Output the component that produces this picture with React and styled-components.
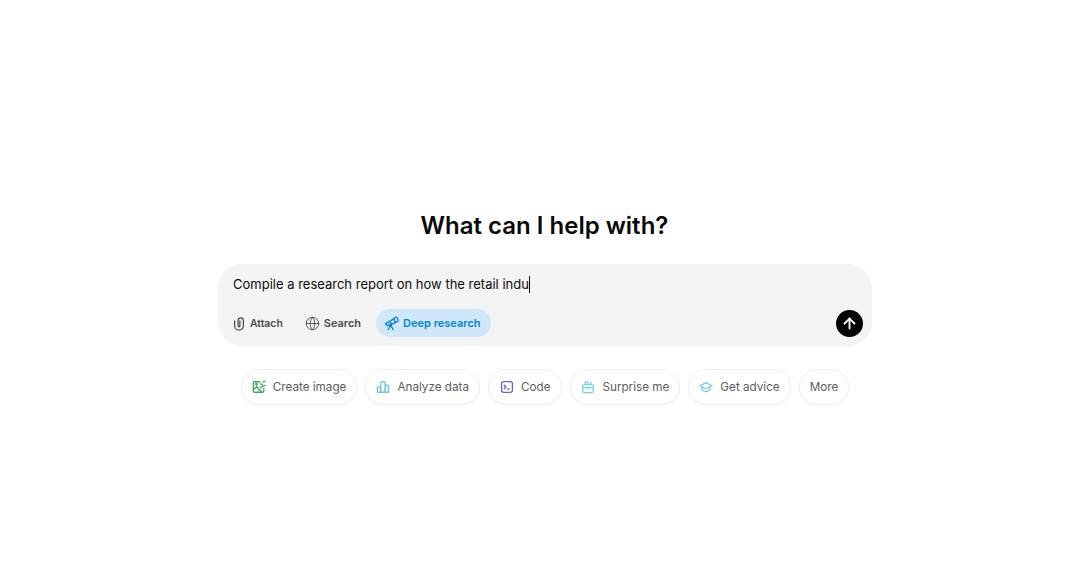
import React from 'react'
import styled, { createGlobalStyle } from 'styled-components'
import { ArrowUp, Globe } from 'lucide-react'

const GlobalStyle = createGlobalStyle`
    html, body {
        margin: 0;
        padding: 0;
        background: #ffffff;
        font-family: Inter, "Liberation Sans", sans-serif;
    }
`

const Page = styled.main`
    width: 1085px;
    height: 588px;
    box-sizing: border-box;
    padding-top: 210px;
    display: flex;
    flex-direction: column;
    align-items: center;
    overflow: hidden;
`

const Title = styled.h1`
    margin: 0 0 22px 4px;
    font-size: 24px;
    line-height: 32px;
    font-weight: 600;
    color: #0a0a0a;
`

const Composer = styled.div`
    width: 654px;
    height: 82px;
    box-sizing: border-box;
    margin-left: 5px;
    padding: 10px 9px 9px 15px;
    border-radius: 24px;
    background: #f4f4f4;
    display: flex;
    flex-direction: column;
    justify-content: space-between;
`

const Prompt = styled.div`
    font-size: 13px;
    line-height: 21px;
    color: #0d0d0d;
    display: flex;
    align-items: center;
`

const Caret = styled.span`
    width: 1px;
    height: 17px;
    background: #0d0d0d;
`

const Toolbar = styled.div`
    display: flex;
    align-items: center;
    margin-left: -9px;
`

const Tool = styled.button`
    height: 28px;
    border: 0;
    border-radius: 14px;
    padding: 0 ${p => (p.$active ? '10px' : '7px')} 0 8px;
    margin-right: ${p => p.$gap || 0}px;
    display: flex;
    align-items: center;
    gap: 4px;
    font: 600 ${p => (p.$small ? '10.4px' : '11px')} Inter, "Liberation Sans", sans-serif;
    color: ${p => (p.$active ? '#0285d0' : '#4a4a4a')};
    background: ${p => (p.$active ? '#cfe7f9' : 'transparent')};
`

const ToolIcon = styled.svg`
    width: ${p => p.$size || 15}px;
    height: 15px;
    flex: none;
    fill: none;
    stroke: currentColor;
    stroke-width: 1.4;
    stroke-linecap: round;
    stroke-linejoin: round;
`

const Send = styled.button`
    width: 27px;
    height: 27px;
    margin-left: auto;
    border: 0;
    border-radius: 50%;
    padding: 0;
    background: #000000;
    color: #ffffff;
    display: flex;
    align-items: center;
    justify-content: center;
`

const Chips = styled.div`
    margin-top: 23px;
    margin-left: 5px;
    display: flex;
    gap: 8px;
`

const Chip = styled.button`
    height: 36px;
    box-sizing: border-box;
    padding: 0 ${p => p.$pad || 10}px;
    border: 1px solid #efefef;
    border-radius: 18px;
    background: #ffffff;
    box-shadow: 0 1px 2px rgba(0, 0, 0, 0.03);
    display: flex;
    align-items: center;
    gap: 7px;
    font: 400 11.7px Inter, "Liberation Sans", sans-serif;
    color: #5d5d5d;
`

const ChipIcon = styled.svg`
    width: 14px;
    height: 14px;
    flex: none;
    fill: none;
    stroke: ${p => p.$color};
    stroke-width: 1.5;
    stroke-linecap: round;
    stroke-linejoin: round;
`

const ClipIcon = () => (
    <ToolIcon viewBox="0 0 16 16" $size={14}>
        <path d="M3 5v5.6a5 5 0 0 0 10 0V4.6a3 3 0 0 0-6 0v6.2a1 1 0 0 0 2 0V5" />
    </ToolIcon>
)

const ScopeIcon = () => (
    <ToolIcon viewBox="0 0 16 16">
        <path d="M1.6 8.2 10.4 3l1.8 4-8.6 3.4-2-2.2Z" />
        <path d="M10.8 2.4 12.4 1.4a1 1 0 0 1 1.4.4l1.2 2.8a1 1 0 0 1-.5 1.3L12.8 6.4" />
        <path d="M7 9.4 4.4 14.6M7 9.4l2.8 5.2" />
        <circle cx="7.4" cy="8.4" r="1.1" />
    </ToolIcon>
)

const ImageIcon = () => (
    <ChipIcon viewBox="0 0 16 16" $color="#3fa45b">
        <path d="M9 2H2.8a1.3 1.3 0 0 0-1.3 1.3v9.4A1.3 1.3 0 0 0 2.8 14h9.4a1.3 1.3 0 0 0 1.3-1.3V10" />
        <path d="M1.5 11.5 5.5 7.5 11 14" />
        <circle cx="5" cy="4.8" r="0.8" />
        <path d="M9.5 8.8 15 6M10 4.2l2 1.4M12.8 2.4l1.8-1" />
    </ChipIcon>
)

const ChartIcon = () => (
    <ChipIcon viewBox="0 0 16 16" $color="#76c7e3">
        <rect x="1.5" y="8" width="4" height="6" rx="1" />
        <rect x="5.5" y="2" width="5" height="12" rx="1" />
        <rect x="10.5" y="6" width="4" height="8" rx="1" />
    </ChipIcon>
)

const CodeIcon = () => (
    <ChipIcon viewBox="0 0 16 16" $color="#6f63b6">
        <rect x="1.8" y="1.8" width="12.4" height="12.4" rx="2.4" />
        <path d="M4.8 6 6.8 8 4.8 10M8.4 10.4h2.4" />
    </ChipIcon>
)

const GiftIcon = () => (
    <ChipIcon viewBox="0 0 16 16" $color="#7ad0dd">
        <path d="M3.6 5.2h8.8a1.6 1.6 0 0 1 1.6 1.6v6a1.6 1.6 0 0 1-1.6 1.6H3.6A1.6 1.6 0 0 1 2 12.8v-6a1.6 1.6 0 0 1 1.6-1.6Z" />
        <path d="M2 8.8h12M8 8.8v1.6" />
        <path d="M4.6 5.2V2.8a1.2 1.2 0 0 1 2-.9L8.4 4M11.4 5.2V2.4" />
    </ChipIcon>
)

const CapIcon = () => (
    <ChipIcon viewBox="0 0 16 16" $color="#76c7e3">
        <path d="M8 3 1 6.6 8 10l7-3.4L8 3Z" />
        <path d="M3.6 8.2v3C5 12.7 6.4 13.3 8 13.3s3-.6 4.4-2.1v-3" />
    </ChipIcon>
)

const suggestions = [
    { label: 'Create image', Icon: ImageIcon },
    { label: 'Analyze data', Icon: ChartIcon },
    { label: 'Code', Icon: CodeIcon, pad: 11 },
    { label: 'Surprise me', Icon: GiftIcon },
    { label: 'Get advice', Icon: CapIcon },
    { label: 'More' },
]

export default function App() {
    return (
        <Page>
            <GlobalStyle />
            <Title>What can I help with?</Title>
            <Composer>
                <Prompt>
                    Compile a research report on how the retail indu<Caret />
                </Prompt>
                <Toolbar>
                    <Tool $small $gap={7}>
                        <ClipIcon />
                        Attach
                    </Tool>
                    <Tool $gap={8}>
                        <Globe size={15} strokeWidth={1.4} />
                        Search
                    </Tool>
                    <Tool $active>
                        <ScopeIcon />
                        Deep research
                    </Tool>
                    <Send aria-label="Send">
                        <ArrowUp size={17} strokeWidth={2.6} />
                    </Send>
                </Toolbar>
            </Composer>
            <Chips>
                {suggestions.map(({ label, Icon, pad }) => (
                    <Chip key={label} $pad={pad}>
                        {Icon && <Icon />}
                        {label}
                    </Chip>
                ))}
            </Chips>
        </Page>
    )
}
